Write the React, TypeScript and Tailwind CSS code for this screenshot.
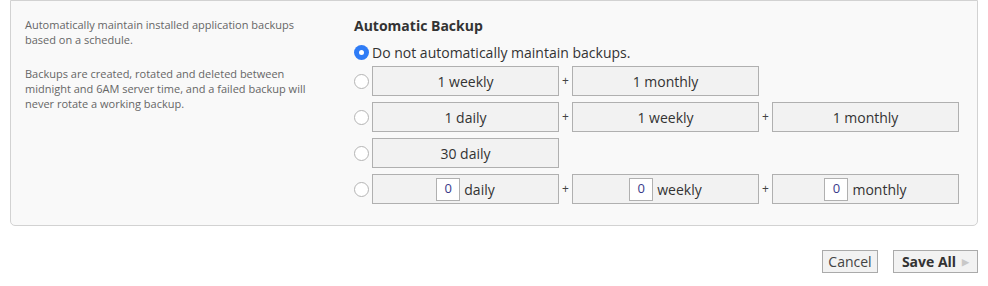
const font = "font-['Open_Sans',_'Liberation_Sans',_sans-serif]";

function Radio({ checked = false }: { checked?: boolean }) {
  return checked ? (
    <span className="flex h-[15px] w-[15px] shrink-0 items-center justify-center rounded-full bg-[#2f7cf6]">
      <span className="h-[5px] w-[5px] rounded-full bg-white" />
    </span>
  ) : (
    <span className="h-[15px] w-[15px] shrink-0 rounded-full border border-[#b4b4b4] bg-white" />
  );
}

function Box({ children }: { children: React.ReactNode }) {
  return (
    <div className="flex h-[30px] w-[187px] shrink-0 items-center justify-center border border-[#b0b0b0] bg-[#f2f2f2] text-[14px] text-[#333]">
      {children}
    </div>
  );
}

function Plus() {
  return <span className="w-[13px] shrink-0 text-center text-[12px] text-[#444]">+</span>;
}

function NumInput({ unit }: { unit: string }) {
  return (
    <span className="flex items-center gap-[4px]">
      <span className="flex h-[23px] w-[24px] items-center justify-center border border-[#b0b0b0] bg-white text-[13px] text-[#3a3a8a]">
        0
      </span>
      {unit}
    </span>
  );
}

export default function App() {
  return (
    <div className={`h-[286px] w-[988px] bg-white ${font}`}>
      <div className="ml-[10px] flex h-[226px] w-[968px] rounded-b-[5px] border border-[#d2d2d2] bg-[#f9f9f9]">
        {/* Description */}
        <div className="w-[332px] shrink-0 pl-[14px] pt-[16px] text-[11px] leading-[15px] text-[#666]">
          <p>
            Automatically maintain installed application backups
            <br />
            based on a schedule.
          </p>
          <p className="mt-[19px]">
            Backups are created, rotated and deleted between
            <br />
            midnight and 6AM server time, and a failed backup will
            <br />
            never rotate a working backup.
          </p>
        </div>

        {/* Options */}
        <div className="pt-[15px] pl-[11px]">
          <h3 className="text-[14px] font-bold leading-[20px] text-[#333]">Automatic Backup</h3>
          <div className="mt-[6px] flex h-[20px] items-center gap-[3px] text-[14px] text-[#333]">
            <Radio checked />
            <span>Do not automatically maintain backups.</span>
          </div>
          <div className="mt-[4px] flex flex-col gap-[6px]">
            <div className="flex items-center gap-[3px]">
              <Radio />
              <div className="flex items-center">
                <Box>1 weekly</Box>
                <Plus />
                <Box>1 monthly</Box>
              </div>
            </div>
            <div className="flex items-center gap-[3px]">
              <Radio />
              <div className="flex items-center">
                <Box>1 daily</Box>
                <Plus />
                <Box>1 weekly</Box>
                <Plus />
                <Box>1 monthly</Box>
              </div>
            </div>
            <div className="flex items-center gap-[3px]">
              <Radio />
              <div className="flex items-center">
                <Box>30 daily</Box>
              </div>
            </div>
            <div className="flex items-center gap-[3px]">
              <Radio />
              <div className="flex items-center">
                <Box>
                  <NumInput unit="daily" />
                </Box>
                <Plus />
                <Box>
                  <NumInput unit="weekly" />
                </Box>
                <Plus />
                <Box>
                  <NumInput unit="monthly" />
                </Box>
              </div>
            </div>
          </div>
        </div>
      </div>

      {/* Actions */}
      <div className="mt-[24px] flex w-[978px] justify-end gap-[15px]">
        <button className="h-[23px] w-[56px] border border-[#aaa] bg-[#f2f2f2] text-[14px] text-[#444]">
          Cancel
        </button>
        <button className="flex h-[23px] w-[85px] items-center justify-center gap-[6px] border border-[#aaa] bg-[#f2f2f2] text-[14px] font-bold text-[#333]">
          Save All
          <span className="text-[9px] text-[#c8c8c8]">▶</span>
        </button>
      </div>
    </div>
  );
}
